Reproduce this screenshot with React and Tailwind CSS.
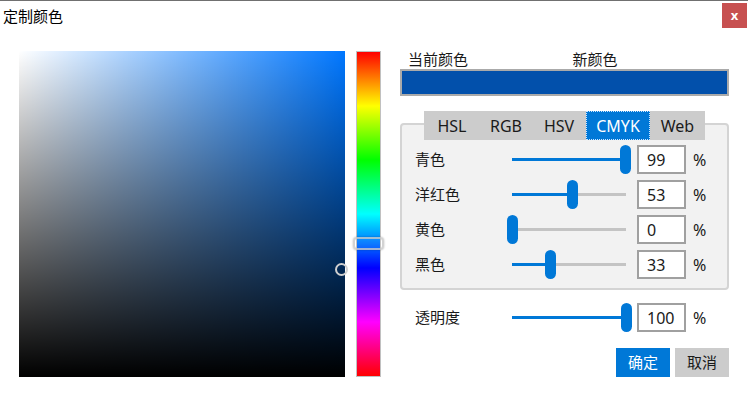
const rows = [
  { label: '青色', value: 99 },
  { label: '洋红色', value: 53 },
  { label: '黄色', value: 0 },
  { label: '黑色', value: 33 },
];

const tabs = [
  { name: 'HSL', w: 'w-[56px]' },
  { name: 'RGB', w: 'w-[52px]' },
  { name: 'HSV', w: 'w-[54px]' },
  { name: 'CMYK', w: 'w-[64px]', active: true },
  { name: 'Web', w: 'w-[55px]' },
];

function Slider({ value }) {
  return (
    <div className="relative flex h-[29px] w-[124px] items-center">
      <div className="mx-[5px] h-[3px] flex-1 bg-[#c4c4c4]">
        <div className="h-full bg-[#0078d7]" style={{ width: `${value * 1.14}px` }} />
      </div>
      <div
        className="absolute top-0 h-[29px] w-[11px] rounded-full bg-[#0078d7]"
        style={{ left: `${value * 1.14}px` }}
      />
    </div>
  );
}

function ValueRow({ label, value }) {
  return (
    <div className="flex h-[29px] items-center">
      <span className="w-[92px] text-[15px] text-[#1a1a1a]">{label}</span>
      <Slider value={value} />
      <div className="ml-[6px] flex h-[29px] w-[49px] items-center border-2 border-[#a0a0a0] bg-white pl-[8px] text-[16px] text-[#1a1a1a]">
        {value}
      </div>
      <span className="ml-[7px] text-[16px] text-[#1a1a1a]">%</span>
    </div>
  );
}

export default function App() {
  return (
    <div className="h-[396px] w-[748px] overflow-hidden border-t border-[#707070] bg-white font-['Noto_Sans','Noto_Sans_CJK_SC',sans-serif]">
      {/* title bar */}
      <div className="flex h-[31px] justify-between">
        <span className="self-center pl-[3px] text-[15px] text-black">定制颜色</span>
        <button className="mr-[1px] mt-[2px] flex h-[25px] w-[25px] items-center justify-center bg-[#c75050] text-[13px] font-bold leading-none text-white">
          x
        </button>
      </div>

      <div className="flex pl-[19px]">
        {/* saturation / value square */}
        <div className="mt-[19px] flex">
          <div className="relative h-[326px] w-[326px] bg-[#0077ff]">
            <div className="absolute inset-0 bg-[linear-gradient(to_right,#ffffff,rgba(255,255,255,0))]" />
            <div className="absolute inset-0 bg-[linear-gradient(to_top,#000000,rgba(0,0,0,0))]" />
            <div className="absolute left-[316px] top-[212px] h-[13px] w-[13px] rounded-full border-2 border-[#d0d0d0]" />
          </div>
          <div className="relative ml-[11px] h-[326px] w-[25px] border border-[#c0c0c0] bg-[linear-gradient(to_bottom,#ff0000,#ffff00,#00ff00,#00ffff,#0000ff,#ff00ff,#ff0000)]">
            <div className="absolute left-[-4px] top-[185px] h-[13px] w-[31px] rounded-[4px] border-2 border-[#c8c8c8]/80 bg-white/5 shadow-[0_0_2px_rgba(0,0,0,0.3)]" />
          </div>
        </div>

        {/* right column */}
        <div className="ml-[19px] mt-[17px] w-[329px]">
          <div className="flex h-[20px] text-[15px] leading-[20px] text-[#1a1a1a]">
            <span className="w-1/2 pl-[8px]">当前颜色</span>
            <span className="w-1/2 pl-[8px]">新颜色</span>
          </div>
          <div className="h-[27px] border-2 border-[#aaaaaa] bg-[#0250ab]" />

          <div className="relative z-10 ml-[24px] mt-[15px] flex h-[29px] w-fit bg-[#cccccc]">
            {tabs.map((t) => (
              <div
                key={t.name}
                className={
                  t.active
                    ? `${t.w} flex items-center justify-center border border-dotted border-[#cfe6ff] bg-[#0078d7] text-[16px] text-white`
                    : `${t.w} flex items-center justify-center text-[16px] text-[#1a1a1a]`
                }
              >
                {t.name}
              </div>
            ))}
          </div>

          <div className="-mt-[17px] flex flex-col gap-[6px] rounded-[4px] border-2 border-[#d4d4d4] bg-[#f2f2f2] pb-[9px] pl-[13px] pt-[20px]">
            {rows.map((r) => (
              <ValueRow key={r.label} {...r} />
            ))}
          </div>

          <div className="mt-[13px] pl-[15px]">
            <ValueRow label="透明度" value={100} />
          </div>

          <div className="mt-[16px] flex justify-end gap-[5px]">
            <button className="h-[29px] w-[54px] bg-[#0078d7] text-[15px] text-white">确定</button>
            <button className="h-[29px] w-[54px] bg-[#cccccc] text-[15px] text-[#1a1a1a]">取消</button>
          </div>
        </div>
      </div>
    </div>
  );
}
